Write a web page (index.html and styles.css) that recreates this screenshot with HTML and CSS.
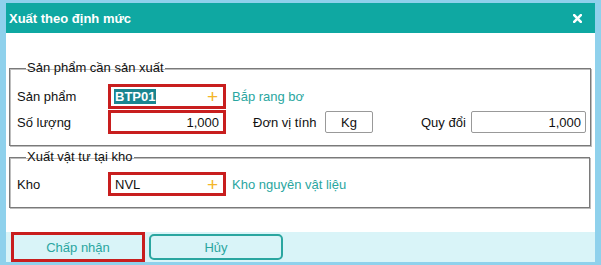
FILE: index.html
```html
<!DOCTYPE html>
<html lang="vi">
<head>
<meta charset="utf-8">
<title>Xuất theo định mức</title>
<link rel="stylesheet" href="styles.css">
</head>
<body>
<div class="dialog">
  <div class="titlebar">
    <span class="title">Xuất theo định mức</span>
    <svg class="close" width="9" height="9" viewBox="0 0 9 9"><path d="M1.2 1.2 L7.8 7.8 M7.8 1.2 L1.2 7.8" stroke="#fff" stroke-width="2.6" stroke-linecap="square"/></svg>
  </div>
  <div class="content">
    <fieldset class="group g1">
      <legend>Sản phẩm cần sản xuất</legend>
      <div class="row r1">
        <span class="label">Sản phẩm</span>
        <div class="field hl"><span class="sel">BTP01</span><span class="plus">+</span></div>
        <span class="link">Bắp rang bơ</span>
      </div>
      <div class="row r2">
        <span class="label">Số lượng</span>
        <div class="field hl num">1,000</div>
        <span class="label2">Đơn vị tính</span>
        <div class="box unit">Kg</div>
        <span class="label3">Quy đổi</span>
        <div class="box conv">1,000</div>
      </div>
    </fieldset>
    <fieldset class="group g2">
      <legend>Xuất vật tư tại kho</legend>
      <div class="row r3">
        <span class="label">Kho</span>
        <div class="field hl"><span class="txt">NVL</span><span class="plus">+</span></div>
        <span class="link">Kho nguyên vật liệu</span>
      </div>
    </fieldset>
  </div>
  <div class="footer">
    <button class="btn ok">Chấp nhận</button>
    <button class="btn cancel">Hủy</button>
  </div>
</div>
</body>
</html>
```
FILE: styles.css
```css
html, body {
  margin: 0;
  padding: 0;
}
body {
  background: #8fd1ec;
  font-family: "Liberation Sans", Arial, sans-serif;
  font-size: 13px;
  color: #111;
  width: 601px;
  height: 265px;
  overflow: hidden;
}
.dialog {
  margin: 3px 6px 0 6px;
  width: 589px;
  background: #fff;
}
.titlebar {
  height: 30px;
  background: #0fa8a2;
  display: flex;
  align-items: center;
  justify-content: space-between;
  padding: 0 13px 0 3px;
}
.title {
  color: #fff;
  font-weight: bold;
  font-size: 13px;
}
.close {
  display: block;
}
.content {
  height: 199px;
  padding: 27px 5px 0 3px;
  box-sizing: border-box;
}
.group {
  margin: 0;
  border: 1px solid #7a7a7a;
  box-shadow: inset 1px 1px 0 #bdbdbd, 1px 1px 0 #bdbdbd;
  padding: 8px 4px 11px 7px;
}
.group legend {
  padding: 0 1px;
  margin-left: 9px;
  line-height: 16px;
  font-size: 13px;
  color: #111;
}
.g2 {
  margin-top: 3px;
  padding-top: 7px;
}
.row {
  display: flex;
  align-items: center;
}
.r1 { height: 25px; }
.r2 { height: 24px; margin-top: 1px; }
.r3 { height: 24px; }
.label {
  width: 91px;
  flex: none;
}
.field {
  width: 118px;
  height: 100%;
  box-sizing: border-box;
  display: flex;
  align-items: center;
  justify-content: space-between;
  padding: 0 5px 0 3px;
  background: #fff;
}
.hl {
  border: 3px solid #c81e1e;
}
.field.num {
  justify-content: flex-end;
  padding-right: 4px;
}
.sel {
  background: #1a8590;
  color: #fff;
  font-weight: bold;
  padding: 0 1px;
  line-height: 15px;
}
.txt {
  padding-left: 1px;
}
.plus {
  color: #f4b62a;
  font-size: 19px;
  line-height: 1;
}
.link {
  color: #2aa6a0;
  margin-left: 6px;
}
.label2 {
  margin-left: 27px;
  width: 72px;
}
.label3 {
  margin-left: 48px;
  width: 50px;
}
.box {
  height: 22px;
  box-sizing: border-box;
  border: 1px solid #999;
  border-radius: 2px;
  display: flex;
  align-items: center;
}
.unit {
  width: 48px;
  justify-content: center;
}
.conv {
  width: 115px;
  justify-content: flex-end;
  padding-right: 4px;
}
.footer {
  height: 30px;
  background: #d9f4f8;
  display: flex;
  align-items: center;
  padding-left: 5px;
  gap: 4px;
}
.btn {
  font-family: "Liberation Sans", Arial, sans-serif;
  font-size: 13px;
  color: #2aa6a0;
  background: #d9f4f8;
  box-sizing: border-box;
  margin: 0;
}
.ok {
  width: 134px;
  height: 30px;
  border: 3px solid #c81e1e;
}
.cancel {
  width: 134px;
  height: 26px;
  border: 2px solid #2aa6a0;
  border-radius: 5px;
}
```
